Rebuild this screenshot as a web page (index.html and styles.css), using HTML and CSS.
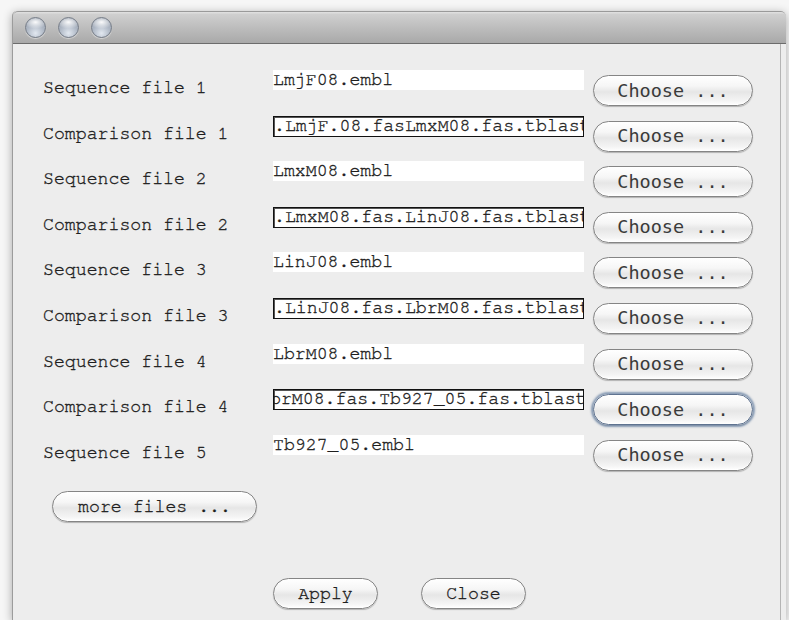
FILE: index.html
```html
<!DOCTYPE html>
<html lang="en">
<head>
<meta charset="utf-8">
<title>Files</title>
<link rel="stylesheet" href="styles.css">
</head>
<body>
<div class="window">
  <div class="titlebar">
    <span class="light"></span>
    <span class="light"></span>
    <span class="light"></span>
  </div>
  <div class="content">
    <div class="files">
      <div class="row">
        <span class="label">Sequence file 1</span>
        <div class="field">LmjF08.embl</div>
        <button class="btn choose">Choose ...</button>
      </div>
      <div class="row">
        <span class="label">Comparison file 1</span>
        <div class="field boxed">.LmjF.08.fasLmxM08.fas.tblastx</div>
        <button class="btn choose">Choose ...</button>
      </div>
      <div class="row">
        <span class="label">Sequence file 2</span>
        <div class="field">LmxM08.embl</div>
        <button class="btn choose">Choose ...</button>
      </div>
      <div class="row">
        <span class="label">Comparison file 2</span>
        <div class="field boxed">.LmxM08.fas.LinJ08.fas.tblastx</div>
        <button class="btn choose">Choose ...</button>
      </div>
      <div class="row">
        <span class="label">Sequence file 3</span>
        <div class="field">LinJ08.embl</div>
        <button class="btn choose">Choose ...</button>
      </div>
      <div class="row">
        <span class="label">Comparison file 3</span>
        <div class="field boxed">.LinJ08.fas.LbrM08.fas.tblastx</div>
        <button class="btn choose">Choose ...</button>
      </div>
      <div class="row">
        <span class="label">Sequence file 4</span>
        <div class="field">LbrM08.embl</div>
        <button class="btn choose">Choose ...</button>
      </div>
      <div class="row">
        <span class="label">Comparison file 4</span>
        <div class="field boxed scrolled">brM08.fas.Tb927_05.fas.tblastx</div>
        <button class="btn choose focused">Choose ...</button>
      </div>
      <div class="row">
        <span class="label">Sequence file 5</span>
        <div class="field">Tb927_05.embl</div>
        <button class="btn choose">Choose ...</button>
      </div>
    </div>
    <div class="more">
      <button class="btn more-btn">more files ...</button>
    </div>
    <div class="actions">
      <button class="btn action">Apply</button>
      <button class="btn action">Close</button>
    </div>
  </div>
</div>
</body>
</html>
```
FILE: styles.css
```css
html, body {
  margin: 0;
  height: 100%;
  overflow: hidden;
}

body {
  background: #f6f6f6;
  padding: 11px 3px 0 12px;
  box-sizing: border-box;
  font-family: "Nimbus Mono PS", "Nimbus Mono L", "FreeMono", "Courier", "Liberation Mono", monospace;
  font-size: 18.2px;
  color: #1e1e1e;
  -webkit-text-stroke: 0.35px #1e1e1e;
}

/* Window frame */
.window {
  width: 774px;
  height: 609px;
  box-sizing: border-box;
  background: #ededed;
  border-radius: 5px 5px 0 0;
  border-left: 1px solid #9c9c9c;
  box-shadow: 0 2px 10px rgba(0, 0, 0, 0.32);
  overflow: hidden;
  display: flex;
  flex-direction: column;
}

.titlebar {
  height: 33px;
  box-sizing: border-box;
  flex: none;
  display: flex;
  align-items: center;
  gap: 12px;
  padding: 0 0 1px 12px;
  background: linear-gradient(#e2e2e2 0, #cfcfcf 8%, #bdbdbd 50%, #a9a9a9 100%);
  border-top: 1px solid #9a9a9a;
  border-bottom: 1px solid #6c6c6c;
  border-radius: 5px 5px 0 0;
}

/* Graphite window controls */
.light {
  width: 21px;
  height: 21px;
  box-sizing: border-box;
  border-radius: 50%;
  border: 1px solid #767d88;
  background:
    radial-gradient(ellipse 60% 35% at 50% 22%, rgba(255, 255, 255, 0.95), rgba(255, 255, 255, 0) 100%),
    radial-gradient(circle at 50% 80%, #e2e8f0 0, #b2bbc8 45%, #8b94a2 100%);
  box-shadow: 0 1px 1px rgba(255, 255, 255, 0.5);
}

.content {
  flex: 1;
  margin-right: 5px;
  border-right: 1px solid #b4b4b4;
  padding: 21px 0 0 30px;
  display: flex;
  flex-direction: column;
}

/* File rows */
.files {
  display: flex;
  flex-direction: column;
}

.row {
  height: 45.6px;
  display: grid;
  grid-template-columns: 221px 311px 160px;
  column-gap: 9px;
  align-items: start;
}

.label {
  margin-top: 13px;
  line-height: 20px;
  white-space: nowrap;
}

.field {
  margin-top: 5px;
  height: 20px;
  box-sizing: border-box;
  background: #fff;
  line-height: 20px;
  white-space: nowrap;
  overflow: hidden;
}

.field.boxed {
  height: 21px;
  border: 1px solid #111;
  box-shadow: inset 1px 1px 0 #555;
  line-height: 18px;
}

.field.scrolled {
  text-indent: -4px;
}

/* Aqua push buttons */
.btn {
  display: block;
  height: 31px;
  box-sizing: border-box;
  padding: 0;
  border: 1px solid #858585;
  border-radius: 16px;
  background: linear-gradient(#ffffff 0, #f6f6f6 35%, #e6e6e6 55%, #f4f4f4 85%, #ffffff 100%);
  box-shadow: 0 1px 1px rgba(0, 0, 0, 0.25), inset 0 -1px 1px rgba(255, 255, 255, 0.9);
  font-family: "Nimbus Mono PS", "Nimbus Mono L", "FreeMono", "Courier", "Liberation Mono", monospace;
  font-size: 18.2px;
  color: #1e1e1e;
  -webkit-text-stroke: 0.35px #1e1e1e;
  text-align: center;
  line-height: 28px;
  white-space: pre;
}

.btn.choose {
  margin-top: 10px;
  width: 160px;
  font-family: "DejaVu Sans Mono", monospace;
  font-size: 18.5px;
  color: #3a3a3a;
  -webkit-text-stroke: 0;
  line-height: 26px;
}

.btn.focused {
  border-color: #5f7390;
  box-shadow: 0 0 2px 2px rgba(120, 142, 172, 0.85), 0 1px 1px rgba(0, 0, 0, 0.3);
}

.more {
  margin-top: 16px;
  padding-left: 9px;
}

.more-btn {
  width: 205px;
}

.actions {
  margin-top: 56px;
  margin-left: -30px;
  display: flex;
  justify-content: center;
  gap: 43px;
  padding-left: 6px;
}

.action {
  width: 105px;
}
```
